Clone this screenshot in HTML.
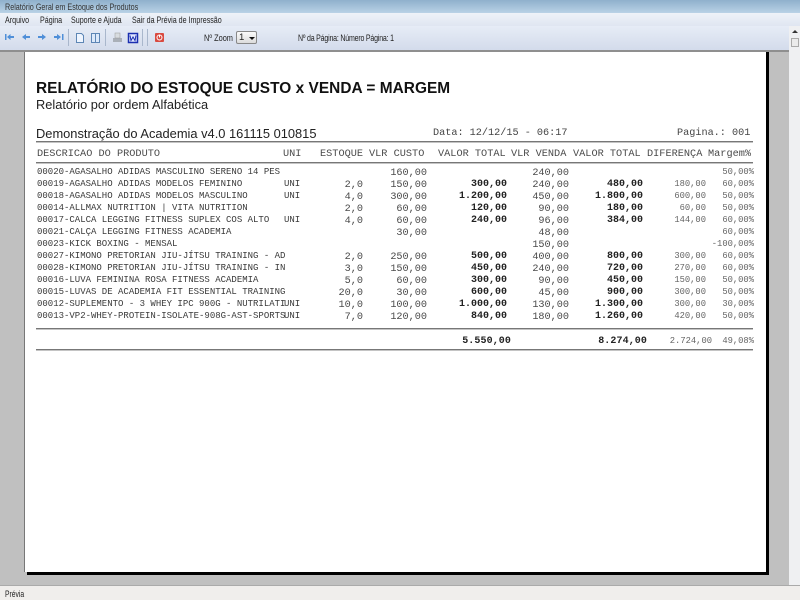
<!DOCTYPE html>
<html><head><meta charset="utf-8"><style>
html,body{margin:0;padding:0;width:800px;height:600px;overflow:hidden;background:#c0c0c0}
body{filter:blur(.3px)}
div{position:absolute;white-space:pre}
.u{font:9px/12px "Liberation Sans",sans-serif;color:#222;transform:scaleX(.79);transform-origin:0 0}
.m{font-family:"Liberation Mono",monospace;color:#444}
.d,.n,.b,.s,.p{height:12px;line-height:12px}
.d{left:37px;font-size:9px;font-family:"Liberation Mono",monospace;color:#3a3a3a}
.n{font-size:10.2px;font-family:"Liberation Mono",monospace;color:#4a4a4a;text-align:right;margin-top:2px}
.b{font-size:10px;font-weight:bold;font-family:"Liberation Mono",monospace;color:#222;text-align:right;margin-top:1px}
.s{font-size:8.8px;font-family:"Liberation Mono",monospace;color:#666;text-align:right}
.l{left:36px;width:717px;height:1px;background:#777;border-bottom:1px solid #c4c4c4}
.h{top:148px;height:12px;font:10.25px/12px "Liberation Mono",monospace;color:#4a4a4a}
</style></head><body>
<div style="left:0;top:0;width:800px;height:13px;background:linear-gradient(#8fb0cc,#b9d2e6)"></div>
<div class="u" style="left:5px;top:1px;color:#333;transform:scaleX(.8)">Relatório Geral em Estoque dos Produtos</div>
<div style="left:0;top:13px;width:800px;height:13px;background:linear-gradient(#eef2f8,#dfe5f1)"></div>
<div class="u" style="left:5px;top:14px">Arquivo</div>
<div class="u" style="left:40px;top:14px">Página</div>
<div class="u" style="left:71px;top:14px">Suporte e Ajuda</div>
<div class="u" style="left:132px;top:14px">Sair da Prévia de Impressão</div>
<div style="left:0;top:26px;width:800px;height:24px;background:linear-gradient(#e6ecf6,#d3dbeb)"></div>
<svg style="position:absolute;left:0;top:28px" width="200" height="22">
<g fill="#4f8fd8">
<path d="M5 6h1.500v6H5zM7 9l3.500-3v2H14v2h-3.500v2z"/>
<path d="M22 9l4-3v2h4v2h-4v2z"/>
<path d="M46 9l-4-3v2h-4v2h4v2z"/>
<path d="M61 9l-4-3v2h-3v2h3v2zM62 6h1.500v6H62z"/>
</g>
<g fill="none" stroke="#a9b7cc"><path d="M68.500 1v17M105.500 1v17M142.500 1v17M147.500 1v17"/></g>
<path d="M76.500 5.500h5l2 2v7h-7z" fill="#eef5ff" stroke="#5d86b5"/>
<path d="M91.500 5.500h8v9h-8z" fill="#dce9fa" stroke="#5d86b5"/><path d="M95.500 5.500v9" stroke="#5d86b5"/>
<rect x="113" y="10" width="9" height="4" fill="#aab0b8"/><rect x="115" y="5" width="5" height="5" fill="#d8dce0" stroke="#999" stroke-width=".5"/>
<rect x="128.500" y="5.500" width="9" height="9" fill="#dfe6ff" stroke="#1a2fb0" stroke-width="1.500"/>
<path d="M130 7.500l1 5 2-3.500 2 3.500 1-5" fill="none" stroke="#1a2fb0"/>
<rect x="155" y="5" width="9" height="9" rx="1" fill="#d94a40"/>
<circle cx="159.500" cy="9.500" r="2.500" fill="none" stroke="#fff"/><path d="M159.500 6.500v3" stroke="#fff"/>
</svg>
<div class="u" style="left:204px;top:32px;transform:scaleX(.82)">Nº Zoom</div>
<div style="left:236px;top:31px;width:21px;height:13px;background:linear-gradient(#fafafa,#dcdcdc);border:1px solid #888;border-radius:2px;box-sizing:border-box"></div>
<div class="u" style="left:239px;top:32px;font-size:9.500px;transform:none">1</div>
<div style="left:249px;top:37px;width:0;height:0;border:3px solid transparent;border-top:3px solid #111;border-bottom:0"></div>
<div class="u" style="left:298px;top:32px;letter-spacing:-.25px;transform:scaleX(.78)">Nº da Página: Número Página: 1</div>
<div style="left:0;top:50px;width:800px;height:535px;background:#c0c0c0"></div>
<div style="left:0;top:50px;width:789px;height:2px;background:#8f8f8f"></div>
<div style="left:789px;top:26px;width:11px;height:559px;background:#eff0f2"></div>
<div style="left:791px;top:38px;width:8px;height:9px;background:#ebebeb;border:1px solid #aaa;box-sizing:border-box"></div>
<div style="left:792px;top:30px;width:0;height:0;border:3px solid transparent;border-bottom:3px solid #333;border-top:0"></div>
<div style="left:27px;top:52px;width:742px;height:523px;background:#000"></div>
<div style="left:24px;top:52px;width:742px;height:520px;background:#fff;border-left:1px solid #777;box-sizing:border-box"></div>
<div style="left:0;top:585px;width:800px;height:15px;background:#f0eeec;border-top:1px solid #aaa;box-sizing:border-box"></div>
<div class="u" style="left:5px;top:588px;transform:scaleX(.75)">Prévia</div>

<div style="left:36px;top:80px;font:bold 15.4px/18px 'Liberation Sans',sans-serif;color:#111;letter-spacing:.05px">RELATÓRIO DO ESTOQUE CUSTO x VENDA = MARGEM</div>
<div style="left:36px;top:97px;font:12.8px/15px 'Liberation Sans',sans-serif;color:#222">Relatório por ordem Alfabética</div>
<div style="left:36px;top:126px;font:12.87px/16px 'Liberation Sans',sans-serif;color:#222">Demonstração do Academia v4.0 161115 010815</div>
<div class="m" style="left:433px;top:126px;font-size:10.2px;line-height:12px;margin-top:2px">Data: 12/12/15 - 06:17</div>
<div class="m" style="left:677px;top:126px;font-size:10.2px;line-height:12px;margin-top:2px">Pagina.: 001</div>
<div class="l" style="top:141px"></div>
<div class="l" style="top:162px"></div>
<div class="h" style="left:37px">DESCRICAO DO PRODUTO</div>
<div class="h" style="left:283px">UNI</div>
<div class="h" style="left:320px">ESTOQUE</div>
<div class="h" style="left:369px">VLR CUSTO</div>
<div class="h" style="left:438px">VALOR TOTAL</div>
<div class="h" style="left:511px">VLR VENDA</div>
<div class="h" style="left:573px">VALOR TOTAL</div>
<div class="h" style="left:647px">DIFERENÇA</div>
<div class="h" style="left:708px">Margem%</div>

<div class="d" style="top:166px">00020-AGASALHO ADIDAS MASCULINO SERENO 14 PES</div>
<div class="n" style="top:166px;right:373px">160,00</div><div class="n" style="top:166px;right:231px">240,00</div><div class="s" style="top:166px;right:46px">50,00%</div>

<div class="d" style="top:178px">00019-AGASALHO ADIDAS MODELOS FEMININO</div><div class="d" style="top:178px;left:284px">UNI</div>
<div class="n" style="top:178px;right:437px">2,0</div><div class="n" style="top:178px;right:373px">150,00</div><div class="b" style="top:178px;right:293px">300,00</div><div class="n" style="top:178px;right:231px">240,00</div><div class="b" style="top:178px;right:157px">480,00</div><div class="s" style="top:178px;right:94px">180,00</div><div class="s" style="top:178px;right:46px">60,00%</div>

<div class="d" style="top:190px">00018-AGASALHO ADIDAS MODELOS MASCULINO</div><div class="d" style="top:190px;left:284px">UNI</div>
<div class="n" style="top:190px;right:437px">4,0</div><div class="n" style="top:190px;right:373px">300,00</div><div class="b" style="top:190px;right:293px">1.200,00</div><div class="n" style="top:190px;right:231px">450,00</div><div class="b" style="top:190px;right:157px">1.800,00</div><div class="s" style="top:190px;right:94px">600,00</div><div class="s" style="top:190px;right:46px">50,00%</div>

<div class="d" style="top:202px">00014-ALLMAX NUTRITION | VITA NUTRITION</div>
<div class="n" style="top:202px;right:437px">2,0</div><div class="n" style="top:202px;right:373px">60,00</div><div class="b" style="top:202px;right:293px">120,00</div><div class="n" style="top:202px;right:231px">90,00</div><div class="b" style="top:202px;right:157px">180,00</div><div class="s" style="top:202px;right:94px">60,00</div><div class="s" style="top:202px;right:46px">50,00%</div>

<div class="d" style="top:214px">00017-CALCA LEGGING FITNESS SUPLEX COS ALTO</div><div class="d" style="top:214px;left:284px">UNI</div>
<div class="n" style="top:214px;right:437px">4,0</div><div class="n" style="top:214px;right:373px">60,00</div><div class="b" style="top:214px;right:293px">240,00</div><div class="n" style="top:214px;right:231px">96,00</div><div class="b" style="top:214px;right:157px">384,00</div><div class="s" style="top:214px;right:94px">144,00</div><div class="s" style="top:214px;right:46px">60,00%</div>

<div class="d" style="top:226px">00021-CALÇA LEGGING FITNESS ACADEMIA</div>
<div class="n" style="top:226px;right:373px">30,00</div><div class="n" style="top:226px;right:231px">48,00</div><div class="s" style="top:226px;right:46px">60,00%</div>

<div class="d" style="top:238px">00023-KICK BOXING - MENSAL</div>
<div class="n" style="top:238px;right:231px">150,00</div><div class="s" style="top:238px;right:46px">-100,00%</div>

<div class="d" style="top:250px">00027-KIMONO PRETORIAN JIU-JÍTSU TRAINING - AD</div>
<div class="n" style="top:250px;right:437px">2,0</div><div class="n" style="top:250px;right:373px">250,00</div><div class="b" style="top:250px;right:293px">500,00</div><div class="n" style="top:250px;right:231px">400,00</div><div class="b" style="top:250px;right:157px">800,00</div><div class="s" style="top:250px;right:94px">300,00</div><div class="s" style="top:250px;right:46px">60,00%</div>

<div class="d" style="top:262px">00028-KIMONO PRETORIAN JIU-JÍTSU TRAINING - IN</div>
<div class="n" style="top:262px;right:437px">3,0</div><div class="n" style="top:262px;right:373px">150,00</div><div class="b" style="top:262px;right:293px">450,00</div><div class="n" style="top:262px;right:231px">240,00</div><div class="b" style="top:262px;right:157px">720,00</div><div class="s" style="top:262px;right:94px">270,00</div><div class="s" style="top:262px;right:46px">60,00%</div>

<div class="d" style="top:274px">00016-LUVA FEMININA ROSA FITNESS ACADEMIA</div>
<div class="n" style="top:274px;right:437px">5,0</div><div class="n" style="top:274px;right:373px">60,00</div><div class="b" style="top:274px;right:293px">300,00</div><div class="n" style="top:274px;right:231px">90,00</div><div class="b" style="top:274px;right:157px">450,00</div><div class="s" style="top:274px;right:94px">150,00</div><div class="s" style="top:274px;right:46px">50,00%</div>

<div class="d" style="top:286px">00015-LUVAS DE ACADEMIA FIT ESSENTIAL TRAINING</div>
<div class="n" style="top:286px;right:437px">20,0</div><div class="n" style="top:286px;right:373px">30,00</div><div class="b" style="top:286px;right:293px">600,00</div><div class="n" style="top:286px;right:231px">45,00</div><div class="b" style="top:286px;right:157px">900,00</div><div class="s" style="top:286px;right:94px">300,00</div><div class="s" style="top:286px;right:46px">50,00%</div>

<div class="d" style="top:298px">00012-SUPLEMENTO - 3 WHEY IPC 900G - NUTRILATI</div><div class="d" style="top:298px;left:284px">UNI</div>
<div class="n" style="top:298px;right:437px">10,0</div><div class="n" style="top:298px;right:373px">100,00</div><div class="b" style="top:298px;right:293px">1.000,00</div><div class="n" style="top:298px;right:231px">130,00</div><div class="b" style="top:298px;right:157px">1.300,00</div><div class="s" style="top:298px;right:94px">300,00</div><div class="s" style="top:298px;right:46px">30,00%</div>

<div class="d" style="top:310px">00013-VP2-WHEY-PROTEIN-ISOLATE-908G-AST-SPORTS</div><div class="d" style="top:310px;left:284px">UNI</div>
<div class="n" style="top:310px;right:437px">7,0</div><div class="n" style="top:310px;right:373px">120,00</div><div class="b" style="top:310px;right:293px">840,00</div><div class="n" style="top:310px;right:231px">180,00</div><div class="b" style="top:310px;right:157px">1.260,00</div><div class="s" style="top:310px;right:94px">420,00</div><div class="s" style="top:310px;right:46px">50,00%</div>

<div class="l" style="top:328px"></div>
<div class="b" style="top:335px;right:289px;letter-spacing:.1px">5.550,00</div>
<div class="b" style="top:335px;right:153px;letter-spacing:.1px">8.274,00</div>
<div class="s" style="top:335px;right:88px">2.724,00</div>
<div class="s" style="top:335px;right:46px">49,08%</div>
<div class="l" style="top:349px"></div>
</body></html>
